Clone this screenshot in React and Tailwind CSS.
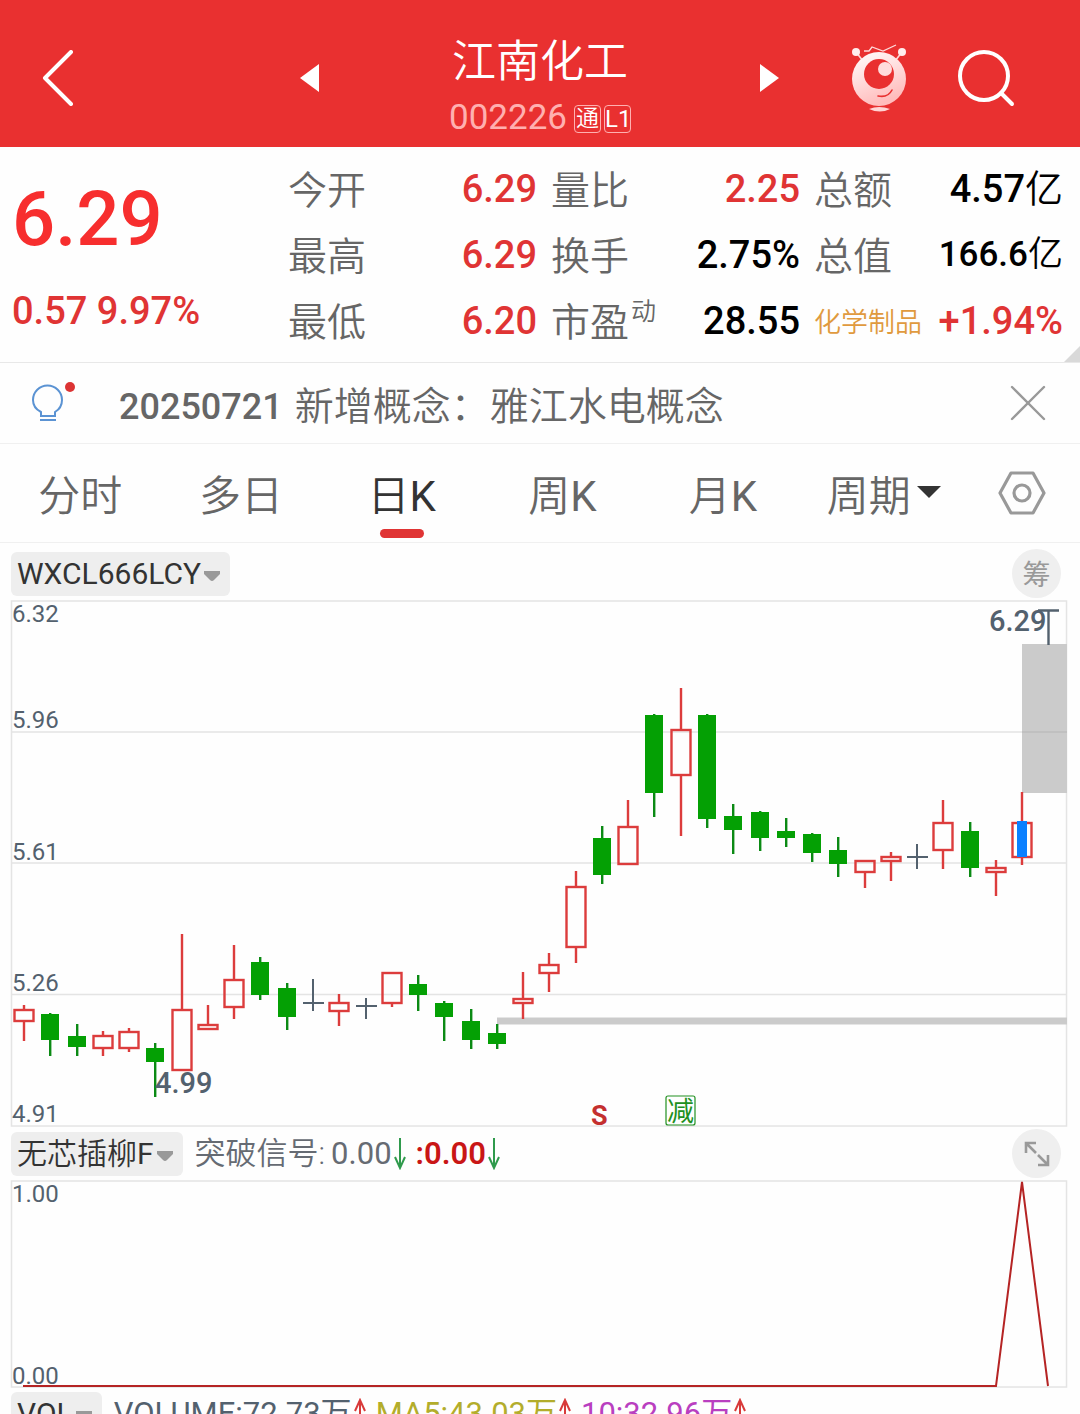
import React from 'react';

const UP = 'up';
const DOWN = 'down';
const FLAT = 'flat';

// [type, high, bodyTop, bodyBottom, low] in chart units
const candles = [
    [UP, 405, 410, 421, 441],
    [DOWN, 413, 414, 440, 456],
    [DOWN, 424, 436, 447, 456],
    [UP, 431, 436, 448, 456],
    [UP, 428, 432, 448, 452],
    [DOWN, 443, 448, 462, 497],
    [UP, 334, 410, 470, 470],
    [UP, 405, 425, 429, 429],
    [UP, 345, 380, 407, 419],
    [DOWN, 357, 362, 395, 400],
    [DOWN, 383, 388, 417, 430],
    [FLAT, 379, 403, 403, 411],
    [UP, 394, 403, 411, 426],
    [FLAT, 398, 406, 406, 419],
    [UP, 373, 373, 403, 407],
    [DOWN, 375, 384, 395, 411],
    [DOWN, 401, 403, 417, 441],
    [DOWN, 409, 421, 440, 449],
    [DOWN, 424, 433, 444, 449],
    [UP, 372, 399, 403, 419],
    [UP, 353, 365, 373, 392],
    [UP, 271, 287, 347, 363],
    [DOWN, 226, 238, 275, 284],
    [UP, 200, 227, 264, 264],
    [DOWN, 114, 115, 193, 217],
    [UP, 88, 130, 175, 236],
    [DOWN, 114, 115, 219, 228],
    [DOWN, 204, 216, 230, 254],
    [DOWN, 211, 212, 238, 251],
    [DOWN, 218, 231, 238, 247],
    [DOWN, 233, 234, 253, 262],
    [DOWN, 237, 250, 264, 277],
    [UP, 261, 261, 272, 288],
    [UP, 252, 257, 261, 281],
    [FLAT, 244, 257, 257, 269],
    [UP, 200, 223, 250, 269],
    [DOWN, 222, 231, 268, 277],
    [UP, 260, 268, 272, 296],
    [UP, 192, 223, 257, 265],
];

const quotes = [
    {label: '今开', value: '6.29', color: 'text-[#e03434]'},
    {label: '量比', value: '2.25', color: 'text-[#e03434]'},
    {label: '总额', value: '4.57', unit: '亿', color: 'text-black'},
    {label: '最高', value: '6.29', color: 'text-[#e03434]'},
    {label: '换手', value: '2.75%', color: 'text-black'},
    {label: '总值', value: '166.6', unit: '亿', color: 'text-black', small: true},
    {label: '最低', value: '6.20', color: 'text-[#e03434]'},
    {label: '市盈', sup: '动', value: '28.55', color: 'text-black'},
    {label: '化学制品', value: '+1.94%', color: 'text-[#e03434]', sector: true},
];

const tabs = [
    {name: '分时'},
    {name: '多日'},
    {name: '日', suffix: 'K', active: true},
    {name: '周', suffix: 'K'},
    {name: '月', suffix: 'K'},
];

const Arrow = ({up}) => (
    <svg className="w-3 h-8 shrink-0" viewBox="0 0 12 32" fill="none" stroke={up ? '#d83a3a' : '#2f9a4c'} strokeWidth="2">
        {up ? <path d="M6 31V2M1 13L6 2l5 11"/> : <path d="M6 0v30M1 19l5 11 5-11"/>}
    </svg>
);

const IndicatorButton = ({name, suffix}) => (
    <button className="flex items-center h-11 pl-[6px] pr-[9px] rounded-md bg-[#eeeeee] text-[30px] leading-[44px] text-[#333] whitespace-nowrap">
        {name && <span className="font-[350]">{name}</span>}
        {suffix}
        <svg className="w-[18px] h-3 mt-1 ml-[2px]" viewBox="0 0 18 12" fill="#999">
            <path d="M1 1h16l0 3-6 6q-2 2-4 0L1 4z"/>
        </svg>
    </button>
);

const Header = () => (
    <header className="grid grid-cols-[1fr_480px_1fr] items-center h-[147px] pt-2 bg-[#e93030] text-white">
        <button aria-label="返回" className="ml-[42px] justify-self-start">
            <svg className="w-8 h-14" viewBox="0 0 32 56" fill="none" stroke="#fff" strokeWidth="4" strokeLinecap="round" strokeLinejoin="round">
                <path d="M29 2L3 28l26 26"/>
            </svg>
        </button>
        <div className="flex items-center justify-between">
            <button aria-label="上一只">
                <svg className="w-5 h-7" viewBox="0 0 20 28" fill="#fff"><path d="M0 14L19 0v28z"/></svg>
            </button>
            <div className="flex flex-col items-center pt-6">
                <h1 className="text-[44px] leading-[58px] font-[350]">江南化工</h1>
                <div className="flex items-center gap-[3px] h-[56px]">
                    <span className="text-[35px] text-[#ffb0b0] mr-1">002226</span>
                    <span className="w-[27px] h-7 border border-[#ffb0b0] rounded-sm text-[23px] leading-[26px] text-center font-[350]">通</span>
                    <span className="w-[27px] h-7 border border-[#ffb0b0] rounded-sm text-[24px] leading-[26px] text-center">L1</span>
                </div>
            </div>
            <button aria-label="下一只">
                <svg className="w-5 h-7" viewBox="0 0 20 28" fill="#fff"><path d="M19 14L0 0v28z"/></svg>
            </button>
        </div>
        <div className="flex items-center justify-end gap-[50px] pr-[65px]">
            <button aria-label="智能助手">
                <svg className="w-14 h-[68px]" viewBox="0 0 56 68">
                    <defs>
                        <linearGradient id="robot" x1="0" y1="0" x2="0.4" y2="1">
                            <stop offset="0" stopColor="#fff"/>
                            <stop offset="1" stopColor="#ffbcbc"/>
                        </linearGradient>
                    </defs>
                    <g stroke="#ffd9d9" fill="none">
                        <path d="M5 8l7 9M51 8l-7 9" strokeWidth="1.6"/>
                        <path d="M13 7h5l3-4 11 4L45 1" strokeWidth="1.3"/>
                    </g>
                    <circle cx="5" cy="8" r="4" fill="#ffeded"/>
                    <circle cx="51" cy="8" r="4" fill="#ffeded"/>
                    <circle cx="28" cy="35" r="27" fill="url(#robot)"/>
                    <circle cx="28" cy="30" r="15" fill="#e93030"/>
                    <circle cx="34" cy="25" r="7" fill="#ffdcdc"/>
                    <path d="M27 52q10 2 14-6" fill="none" stroke="#e93030" strokeWidth="1.6" strokeLinecap="round"/>
                    <path d="M18 65q10-4 21 0-10 5-21 0z" fill="#ffd4d4"/>
                </svg>
            </button>
            <button aria-label="搜索">
                <svg className="w-[58px] h-[58px]" viewBox="0 0 58 58" fill="none" stroke="#fff" strokeWidth="4" strokeLinecap="round">
                    <circle cx="27" cy="27" r="24"/>
                    <path d="M44 44l11 11"/>
                </svg>
            </button>
        </div>
    </header>
);

const QuotePanel = () => (
    <section className="relative flex h-[216px] pl-3 pr-[17px] border-b border-[#e8e8e8]">
        <div className="w-[276px] shrink-0 font-medium">
            <p className="pt-[22px] text-[76px] leading-[100px] text-[#f72e2e]">6.29</p>
            <p className="pt-[18px] text-[38px] leading-[48px] text-[#e03434]">0.57 9.97%</p>
        </div>
        <dl className="flex-1 grid grid-cols-3 gap-x-[14px] content-start pt-[9px]">
            {quotes.map((q) => (
                <div key={q.label} className="flex items-center justify-between h-[66px] whitespace-nowrap">
                    <dt className={`pt-1 font-[350] ${q.sector ? 'text-[27px] text-[#e09a3e]' : 'text-[39px] text-[#666]'}`}>
                        {q.label}
                        {q.sup && <sup className="text-[25px] -top-4 pl-[2px]">{q.sup}</sup>}
                    </dt>
                    <dd className={`${q.color} ${q.small ? 'text-[35px]' : 'text-[38px]'} font-medium`}>
                        {q.value}
                        {q.unit && <span className="font-[350]">{q.unit}</span>}
                    </dd>
                </div>
            ))}
        </dl>
        <svg className="absolute right-0 bottom-0 w-4 h-4" viewBox="0 0 16 16" fill="#d9d9d9"><path d="M16 0v16H0z"/></svg>
    </section>
);

const Notice = () => (
    <section className="flex items-center h-[81px] pl-[30px] pr-[34px] border-b border-[#f0f0f0] text-[39px] text-[#666]">
        <svg className="w-12 h-[42px] mr-[41px] shrink-0" viewBox="0 0 48 42" fill="none" stroke="#5b93d3" strokeWidth="2">
            <path d="M11 34v-4q-8-4-8-12a14.5 14.5 0 0 1 29 0q0 8-7 12v4z"/>
            <path d="M10 38h16"/>
            <circle cx="40" cy="5" r="5" fill="#dc3434" stroke="none"/>
        </svg>
        <p className="flex-1 flex items-center gap-3 pt-2 whitespace-nowrap">
            <span className="text-[36px] font-medium">20250721</span>
            <span className="font-[350]">新增概念：雅江水电概念</span>
        </p>
        <button aria-label="关闭">
            <svg className="w-9 h-9" viewBox="0 0 36 36" stroke="#999" strokeWidth="2.4" strokeLinecap="round">
                <path d="M2 2l32 32M34 2L2 34"/>
            </svg>
        </button>
    </section>
);

const Tabs = () => (
    <nav className="flex h-[99px] border-b border-[#f0f0f0] text-[42px] text-[#666] font-[350]">
        {tabs.map((tab) => (
            <button key={tab.name} className={`relative flex-1 pt-[6px] ${tab.active ? 'text-[#333]' : ''}`}>
                {tab.name}
                {tab.suffix && <span className="font-normal">{tab.suffix}</span>}
                {tab.active && <span className="absolute bottom-1 left-1/2 -translate-x-1/2 w-11 h-[9px] rounded-full bg-[#e03434]"/>}
            </button>
        ))}
        <button className="flex-1 flex items-center justify-center gap-[6px] pt-[6px]">
            周期
            <svg className="w-6 h-3 mb-2" viewBox="0 0 24 12" fill="#333"><path d="M0 0h24L12 12z"/></svg>
        </button>
        <button aria-label="设置" className="w-[116px] flex items-center justify-center">
            <svg className="w-12 h-12" viewBox="0 0 48 48" fill="none" stroke="#999" strokeWidth="3.2" strokeLinejoin="round">
                <path d="M13 4h22l11 20-11 20H13L2 24z"/>
                <circle cx="24" cy="24" r="8"/>
            </svg>
        </button>
    </nav>
);

const Candle = ({x, data}) => {
    const [type, high, top, bottom, low] = data;
    if (type === FLAT) {
        return <path d={`M${x} ${high}V${low}M${x - 10} ${top}h21`} stroke="#53616e" strokeWidth="2"/>;
    }
    if (type === DOWN) {
        return (
            <g fill="#04a004">
                <rect x={x - 1} y={high} width="2.4" height={low - high} fill="#0b8a14"/>
                <rect x={x - 9} y={top} width="18" height={bottom - top}/>
            </g>
        );
    }
    return (
        <g stroke="#dc3c3c" strokeWidth="2.4" fill="none">
            <path d={`M${x} ${high}V${top}M${x} ${bottom}V${low}`}/>
            <rect x={x - 9.5} y={top} width="19" height={bottom - top}/>
        </g>
    );
};

const CandleChart = () => (
    <svg className="block w-full overflow-visible" viewBox="0 0 1056 527">
        <g stroke="#e4e4e4" strokeWidth="1.5" fill="none">
            <rect x="0.5" y="1" width="1055" height="525"/>
            <path d="M0 132h1056M0 263h1056M0 394.5h1056"/>
        </g>
        <path d="M486 417.5h570v7H486zM1011 44h45v149h-45z" fill="#cbcbcb"/>
        <path d="M1011 132h45" stroke="#bdbdbd" strokeWidth="1.5"/>
        {candles.map((c, i) => <Candle key={i} x={Math.round(13 + i * 26.27)} data={c}/>)}
        <rect x="1006" y="221" width="10" height="36" fill="#0a80ff"/>
        <path d="M1027 10.5h21M1037.5 10v35" stroke="#53616e" strokeWidth="2.4"/>
        <g fill="#53616e" fontSize="24">
            <text x="1" y="22">6.32</text>
            <text x="1" y="128">5.96</text>
            <text x="1" y="260">5.61</text>
            <text x="1" y="391">5.26</text>
            <text x="1" y="522">4.91</text>
            <text x="978" y="31" fontSize="29" fontWeight="500">6.29</text>
            <text x="144" y="493" fontSize="29" fontWeight="500">4.99</text>
        </g>
        <text x="580" y="525" fontSize="27" fontWeight="700" fill="#c42f2f">S</text>
        <rect x="655" y="496" width="29" height="29" rx="2" fill="none" stroke="#209020" strokeWidth="1.2"/>
        <text x="656" y="521" fontSize="27" fill="#209020">减</text>
    </svg>
);

const SignalChart = () => (
    <svg className="block w-full overflow-visible" viewBox="0 0 1056 208">
        <rect x="0.5" y="1" width="1055" height="206" fill="none" stroke="#e4e4e4" strokeWidth="1.5"/>
        <g fill="#53616e" fontSize="24">
            <text x="1" y="22">1.00</text>
            <text x="1" y="204">0.00</text>
        </g>
        <path d="M12 206H985L1011 2l26 204" fill="none" stroke="#b52424" strokeWidth="2"/>
    </svg>
);

const App = () => {
    return (
        <div className="h-screen overflow-hidden bg-[#fefefe] font-['Roboto','Noto_Sans_CJK_SC',sans-serif]">
            <Header/>
            <QuotePanel/>
            <Notice/>
            <Tabs/>
            <main className="pl-[11px] pr-[13px]">
                <div className="flex items-center justify-between h-[57px] pr-[6px] pt-1">
                    <IndicatorButton suffix="WXCL666LCY"/>
                    <button className="w-[49px] h-[49px] rounded-full bg-[#efefef] text-[28px] leading-[49px] pt-[2px] text-[#999]">筹</button>
                </div>
                <CandleChart/>
                <div className="flex items-center h-[53px] pr-[6px]">
                    <IndicatorButton name="无芯插柳" suffix="F"/>
                    <p className="flex-1 flex items-center gap-[2px] pl-3 text-[31px] leading-[44px] text-[#666b73] whitespace-nowrap">
                        <span className="pr-1 font-[350]">突破信号:</span>
                        <span>0.00</span>
                        <Arrow/>
                        <span className="pl-2 font-semibold text-[#c91616]">:0.00</span>
                        <Arrow/>
                    </p>
                    <button aria-label="全屏" className="w-[49px] h-[49px] rounded-full bg-[#efefef] flex items-center justify-center">
                        <svg className="w-[26px] h-[26px]" viewBox="0 0 26 26" fill="none" stroke="#999" strokeWidth="2.6">
                            <path d="M2 12V2h10M2 2l10 10M24 14v10H14M24 24L14 14"/>
                        </svg>
                    </button>
                </div>
                <SignalChart/>
                <div className="flex items-center pt-1">
                    <IndicatorButton suffix="VOL"/>
                    <p className="flex items-center gap-[2px] pl-3 text-[31px] leading-[44px] text-[#53616e] whitespace-nowrap">
                        <span>VOLUME:72.73万</span>
                        <Arrow up/>
                        <span className="pl-2 text-[#b3ad2b]">MA5:43.03万</span>
                        <Arrow up/>
                        <span className="pl-2 text-[#b93fc0]">10:32.96万</span>
                        <Arrow up/>
                    </p>
                </div>
            </main>
        </div>
    );
};

export default App;
